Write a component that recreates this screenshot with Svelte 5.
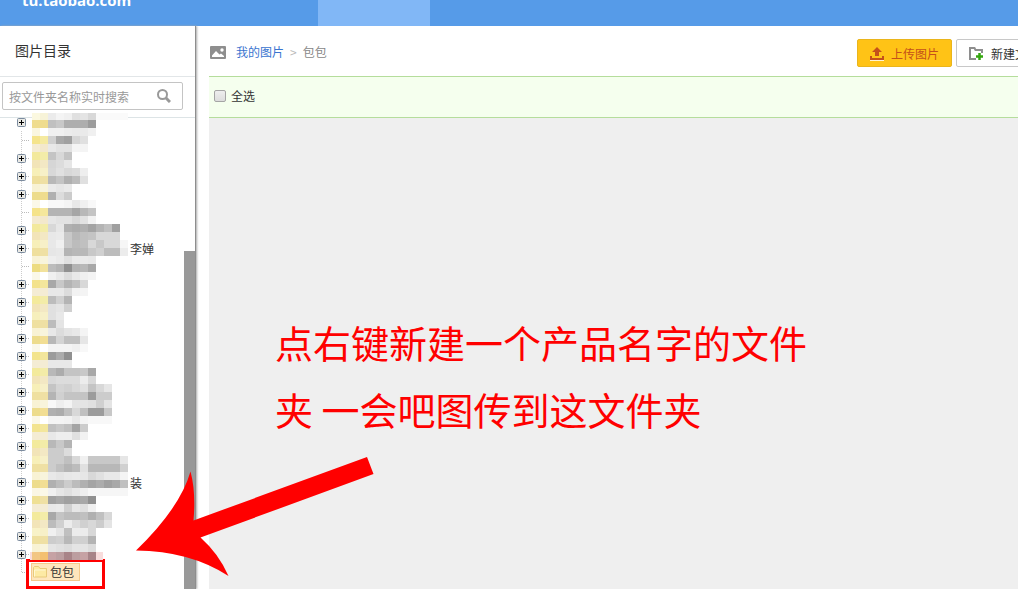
<script lang="ts">
    const rows = [
        { open: true },
        { open: false },
        { open: true },
        { open: true },
        { open: true },
        { open: false },
        { open: true },
        { open: true, tail: '李婵' },
        { open: false },
        ...Array.from({ length: 11 }, () => ({ open: true })),
        { open: true, tail: '装' },
        ...Array.from({ length: 4 }, () => ({ open: true })),
    ] as { open: boolean; tail?: string }[];

    // masked folder names: one line per 8px band, two folder tints and then grey levels
    const bands = `
        fbf8e0 f7f3d8 eb f4 f0 e0 e4 d8 fa fa fa fa
        efdc8e efdc8e c0 c8 ae ae ae 9c
        faf6e0 ffffff f0 f0 ec ea ea f0
        f5e48c f5eaa0 d0 a8 a0 d6 e0
        f5ecd4 f3e8cc e8 e2 e2 f4 f4
        f3e99c f3eca8 c4 d8 c4
        f2e4b8 f3e8c4 d6 dc e6
        f7efb8 f7f0c8 d8 e0 d8 dc ee
        efdf9c efe0a4 b8 c4 b0 bc e0
        f8f2d4 f8f4dc ea e6 ea
        eddc8c efdc8e b0 dc cc
        fbf8e8 ffffff f8 f8 f4 e8 f0 f8
        f5e38a f5e79c b4 b4 b4 a6 b8 c4
        f4ead0 f3e8cc e6 e2 e2 d8 e2 f2
        f3e99c f3eca8 d8 e6 b0 ac b0 a4 b4 c0 a0
        f2e4b8 f3e8c4 e8 ea c8 b8 c0 c4 d8 d8 d8
        f7efb8 f7f0c8 e8 f0 c8 bc c0 d8 c8 d8 d8 f6
        efdf9c efe0a4 e6 e8 b4 b8 b8 c8 d0 bc bc ec
        f8f2d4 f8f4dc ee ea e0 ea ea e8
        eddc80 f2e29c bc b4 90 b4 b8 a8
        faf8e8 ffffff f0 e8 dc e8 f0 f4
        f3e28c f3e69c a8 c8 b4 c0 d8
        f4ecd4 f4ecd4 e8 e8 dc f2 f4
        f4ea9c f3eca8 bc d0 b4
        f2e4b8 f3e8c4 e0 e4 d0
        f6efbc f7f0c8 e0 e8
        efe0a0 efe0a4 bc e4
        f8f2d4 f8f4dc e8 dc e4 e8 f4
        eddc8c f2de94 b8 d4 c0 c0 e6
        faf8ea ffffff f4 f4 f4 f0 f8
        f3e48c f3e69c 9c ac 90
        f4ecd4 f4ecd4 e8 e8 e8
        f3ea9c f3eca8 b8 ac c4 c4 c8 a8
        f2e4b8 f3e8c4 d8 dc dc dc ec d8
        f7efb8 f7f0c8 c4 d4 d0 d8 e0 c4 d8 e6
        efe0a0 efe0a4 b4 d0 c4 c4 c4 9c cc cc
        f8f2d4 f8f4dc f8 ee f4 e4 e4 e0 d0 e4
        eddc8c f2de94 b0 ac c0 d8 c0 9c 9c c8
        fbf8e8 ffffff f4 f4 f2 e8 f4 f8 f8 f8
        f3e490 f3e69c c0 c8 c0 a4 cc
        f4ecd4 f4ecd4 e8 ee ee e0 f2
        f3ea9c f3eca8 b8 c8 b4
        f2e4b8 f3e8c4 cc cc dc
        f7efb8 f7f0c8 cc cc c0 d8 f0 c8 c8 c8 c8 e6
        efe0a0 efe0a4 cc c0 b4 bc e0 b8 b8 b8 b8 d0
        f8f2d4 f8f4dc e8 e4 e8 ea e6 d8 e0 e8 e8 f4
        eddc8c f2de94 b0 bc cc bc b0 a4 ac a0 a8 c0
        faf6e4 fbf8e8 f0 e6 e0 e8 ee f6 f6 f6 f6 f6
        efe094 efe0a4 a0 a8 a0 a4 a8 90
        f4ecd4 f4ecd4 e8 ea d0 e6 e0 f0
        f3ea9c f3eca8 a8 c4 bc bc c0 b0 c0 d8
        f2e4b8 f3e8c4 bc d0 ec dc d0 d8 cc e4
        f8f2c8 f7f0c8 f0 e4 c0 ec ec d8
        efe0a0 efe0a4 cc d0 b8 d0 d0 b4
        f8f2d4 f8f4dc e4 e0 dc e4 e4 dc
        f2c684 f4c070 c6a2a4 bc9ea0 a88488 bc9ea0 c6a2a4 a88488`
        .trim()
        .split('\n')
        .map((line) => line.trim().split(' '));

    const color = (c: string) => '#' + (c.length === 2 ? c.repeat(3) : c);
</script>

<div class="page">
    <header>
        <a class="site" href="#home">tu.taobao.com</a>
        <div class="tab"></div>
    </header>

    <div class="body">
        <aside>
            <h2>图片目录</h2>
            <div class="search">
                <div class="field">
                    <input type="text" aria-label="搜索" placeholder="按文件夹名称实时搜索" />
                    <button class="find" aria-label="搜索">
                        <svg width="14" height="14" viewBox="0 0 14 14">
                            <circle cx="5.5" cy="5.5" r="4.5" fill="none" stroke="#999" stroke-width="2" />
                            <path d="M9 9l4 4" stroke="#999" stroke-width="3" />
                        </svg>
                    </button>
                </div>
            </div>
            <div class="folders">
                <ul>
                    {#each rows as row}
                        <li>
                            {#if row.open}
                                <button class="toggle" aria-label="展开">
                                    <svg width="9" height="9" viewBox="0 0 9 9">
                                        <rect x="0.5" y="0.5" width="8" height="8" rx="1" fill="#e9e9e4" stroke="#7b8b9f" />
                                        <path d="M2 4.5h5M4.5 2v5" stroke="#000" />
                                    </svg>
                                </button>
                            {/if}
                            <span class="tail">{row.tail ?? ''}</span>
                        </li>
                    {/each}
                    <li class="last">
                        <a class="current" href="#bag">
                            <svg width="15" height="12" viewBox="0 0 15 12">
                                <path d="M.5 11V1.500l1-1h4l1.500 2H13.500v8.500z" fill="#fdeaa4" stroke="#e8cb7c" />
                                <path d="M1.500 10.500V4h11" fill="none" stroke="#fff8d4" />
                            </svg>
                            包包
                        </a>
                        <span class="mark"></span>
                    </li>
                </ul>
                <svg class="mosaic" width="112" height="447" viewBox="28 113 112 447" shape-rendering="crispEdges">
                    <rect x="30" y="552" width="73" height="8" fill="#f8dcdc" />
                    {#each bands as band, y}
                        {#each band as cell, x}
                            <rect x={32 + x * 8} y={112 + y * 8} width="8" height="8" fill={color(cell)} />
                        {/each}
                    {/each}
                </svg>
                <div class="track"><div class="thumb"></div></div>
            </div>
        </aside>

        <main>
            <div class="toolbar">
                <nav>
                    <svg width="16" height="13" viewBox="0 0 16 13">
                        <rect width="16" height="13" rx="1" fill="#8e8e8e" />
                        <path d="M2 11V9.500L6 5l3.500 3.500L11 7.500l3 2.500v1z" fill="#fff" />
                        <circle cx="12" cy="4" r="1.700" fill="#fff" />
                    </svg>
                    <a href="#pictures">我的图片</a>
                    <span class="sep">&gt;</span>
                    <span>包包</span>
                </nav>
                <div class="actions">
                    <button class="upload">
                        <svg width="14" height="14" viewBox="0 0 14 14">
                            <path d="M7 0l5 5H9v4H5V5H2z" fill="#c4501a" />
                            <path d="M1 9v3h12V9" fill="none" stroke="#c4501a" stroke-width="2" />
                            <path d="M0 13.500h14" stroke="#fff" stroke-opacity=".8" />
                        </svg>
                        上传图片
                    </button>
                    <button class="create">
                        <svg width="15" height="14" viewBox="0 0 15 14">
                            <path d="M7 12H1V1h4.500l1 2H13v3" fill="none" stroke="#8e8e8e" stroke-width="2" />
                            <path d="M10.500 6v7M7 9.500h7" stroke="#35a60f" stroke-width="2.500" />
                        </svg>
                        新建文件夹
                    </button>
                </div>
            </div>
            <div class="select-all">
                <input type="checkbox" id="all" />
                <label for="all">全选</label>
            </div>
            <div class="canvas">
                <p class="note">点右键新建一个产品名字的文件<br />夹 一会吧图传到这文件夹</p>
            </div>
        </main>
    </div>

    <svg class="arrow" width="240" height="108" viewBox="135 470 240 108">
        <path d="M367 457L373.500 474L200.500 537.500Q219 554 228.500 576Q190 551 136 550.500Q180 508 190.500 471.500Q196 492 193.500 520.500Z" fill="#f00" />
    </svg>
</div>

<style>
    :global(body) {
        margin: 0;
        background: #fff;
    }

    .page {
        position: relative;
        display: flex;
        flex-direction: column;
        min-height: 100vh;
        overflow: hidden;
        font: 12px/18px 'Noto Sans CJK SC', sans-serif;
        color: #333;
    }

    a {
        color: inherit;
        text-decoration: none;
    }

    button {
        font: inherit;
        cursor: pointer;
    }

    svg {
        flex: none;
    }

    header {
        display: flex;
        height: 26px;
        overflow: hidden;
        background: #569be8;
    }

    .site {
        box-sizing: border-box;
        width: 318px;
        padding-left: 22px;
        margin-top: -11px;
        font: bold 15px/22px 'Open Sans', sans-serif;
        color: #fff;
    }

    .tab {
        width: 112px;
        background: #81b7f6;
    }

    .body {
        display: flex;
        flex: 1;
    }

    aside {
        display: flex;
        flex: none;
        flex-direction: column;
        width: 195px;
        border-right: 1px solid #8e8e8e;
        box-shadow: 1px 0 2px #aaa;
    }

    h2 {
        margin: 0;
        padding: 0 0 2px 15px;
        border-bottom: 1px solid #e2e6e8;
        font-size: 14px;
        font-weight: normal;
        line-height: 48px;
    }

    .search {
        padding: 5px 12px 7px 2px;
        border-bottom: 1px solid #dde4e6;
    }

    .field {
        display: flex;
        height: 26px;
        border: 1px solid #c4c4c4;
        border-radius: 2px;
    }

    .field input {
        flex: 1;
        min-width: 0;
        padding: 2px 0 0 6px;
        border: 0;
        outline: 0;
        background: none;
        font: inherit;
    }

    .field input::placeholder {
        color: #999;
    }

    .find {
        display: flex;
        align-items: center;
        padding: 0 11px;
        border: 0;
        background: none;
    }

    .folders {
        position: relative;
        display: flex;
        flex: 1;
        justify-content: space-between;
        margin-top: -5px;
    }

    ul {
        flex: 1;
        margin: 0;
        padding: 0;
        list-style: none;
    }

    li {
        position: relative;
        display: flex;
        align-items: center;
        height: 18px;
        padding-left: 17px;
        background:
            repeating-linear-gradient(90deg, #bbb 0 1px, transparent 1px 2px) 22px 9px / 7px 1px no-repeat,
            repeating-linear-gradient(#ccc 0 1px, transparent 1px 2px) 21px 0 / 1px 100% no-repeat;
    }

    li:first-child {
        background: none;
    }

    .toggle {
        display: flex;
        padding: 0;
        border: 0;
        background: none;
    }

    .tail {
        padding-top: 2px;
        margin-left: 104px;
    }

    .last {
        padding-left: 31px;
        background-size:
            7px 1px,
            1px 9px;
    }

    .current {
        display: flex;
        align-items: center;
        gap: 2px;
        box-sizing: border-box;
        height: 18px;
        padding: 0 5px 0 1px;
        border: 1px solid #f5c98b;
        background: #fee6bd;
    }

    .mark {
        position: absolute;
        top: -4px;
        left: 26px;
        width: 73px;
        height: 24px;
        border: 3px solid #f00;
    }

    .mosaic {
        position: absolute;
        top: 0;
        left: 28px;
    }

    .track {
        display: flex;
        width: 11px;
        padding-top: 138px;
    }

    .thumb {
        flex: 1;
        background: #999;
    }

    main {
        display: flex;
        flex: 1;
        flex-direction: column;
        min-width: 0;
        margin-left: 13px;
    }

    .toolbar {
        display: flex;
        align-items: center;
        justify-content: space-between;
        height: 50px;
        white-space: nowrap;
    }

    nav {
        display: flex;
        align-items: center;
        padding: 2px 0 0 1px;
        color: #888;
    }

    nav a {
        margin-left: 10px;
        color: #3a74cf;
    }

    .sep {
        margin: 0 6px;
        color: #bbb;
    }

    .actions {
        display: flex;
        gap: 4px;
        margin-right: -46px;
        padding-top: 4px;
    }

    .actions button {
        display: flex;
        align-items: center;
        gap: 7px;
        height: 28px;
        padding: 2px 12px 0;
        border: 1px solid #c8c8c8;
        border-radius: 2px;
        background: #fff;
        color: #333;
    }

    .actions .upload {
        border-color: #eab51c;
        background: #ffc316;
        color: #c4501a;
    }

    .select-all {
        display: flex;
        align-items: center;
        gap: 5px;
        box-sizing: border-box;
        height: 42px;
        padding: 0 0 2px 5px;
        border: solid #b5dd9c;
        border-width: 1px 0;
        background: #f5ffee;
    }

    .select-all input {
        appearance: none;
        box-sizing: border-box;
        width: 12px;
        height: 12px;
        margin: 0;
        border: 1px solid #a5a5a5;
        border-radius: 2px;
        background: linear-gradient(#eee, #ddd);
    }

    .canvas {
        position: relative;
        flex: 1;
        background: #efefef;
    }

    .note {
        position: absolute;
        top: 190px;
        left: 66px;
        margin: 0;
        font-size: 38px;
        line-height: 67px;
        color: #f00;
        white-space: nowrap;
    }

    .arrow {
        position: absolute;
        top: 470px;
        left: 135px;
        overflow: visible;
        pointer-events: none;
    }
</style>
